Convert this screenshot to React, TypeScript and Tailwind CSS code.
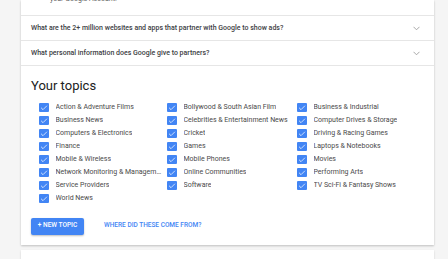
import { Check } from 'lucide-react';

const topics = [
  'Action & Adventure Films',
  'Bollywood & South Asian Film',
  'Business & Industrial',
  'Business News',
  'Celebrities & Entertainment News',
  'Computer Drives & Storage',
  'Computers & Electronics',
  'Cricket',
  'Driving & Racing Games',
  'Finance',
  'Games',
  'Laptops & Notebooks',
  'Mobile & Wireless',
  'Mobile Phones',
  'Movies',
  'Network Monitoring & Management',
  'Online Communities',
  'Performing Arts',
  'Service Providers',
  'Software',
  'TV Sci-Fi & Fantasy Shows',
  'World News',
];

const questions = [
  'What are the 2+ million websites and apps that partner with Google to show ads?',
  'What personal information does Google give to partners?',
];

const Chevron = () => (
  <svg width="7" height="5" viewBox="0 0 7 5" className="text-[#9e9e9e]">
    <polyline points="0.5,0.8 3.5,3.8 6.5,0.8" fill="none" stroke="currentColor" strokeWidth="0.9" />
  </svg>
);

const App = () => {
  return (
    <div className="w-[448px] h-[259px] overflow-hidden bg-[#f5f5f5] font-['Roboto',sans-serif]">
      <div className="ml-[21px] w-[413px] bg-white shadow-[0_1px_2px_rgba(0,0,0,0.22)]">
        {/* tail of the previous answer, scrolled mostly out of view */}
        <div className="h-[15px] overflow-hidden pl-[29px]">
          <p className="-mt-[5px] text-[7px] leading-[9px] text-[#5f5f5f]">your Google Account.</p>
        </div>
        {questions.map((q) => (
          <div
            key={q}
            className="flex h-[25px] items-center justify-between border-t border-[#e6e6e6] pl-[10px] pr-[14px]"
          >
            <span className="text-[7px] font-medium text-[#3c4043]">{q}</span>
            <Chevron />
          </div>
        ))}
        <div className="border-t border-[#e6e6e6] pl-[10px] pt-[12px] pb-[10px]">
          <h2 className="h-[16px] text-[13px] leading-[16px] text-[#212121]">Your topics</h2>
          <div className="mt-[7px] grid grid-cols-[128px_130px_1fr] pl-[8px]">
            {topics.map((t) => (
              <div key={t} className="flex h-[13px] min-w-0 items-center gap-[7px]">
                <span className="flex h-[9.5px] w-[9.5px] shrink-0 items-center justify-center rounded-[1px] bg-[#4285f4]">
                  <Check size={8} strokeWidth={2.2} className="text-white" />
                </span>
                <span className="max-w-[107px] truncate text-[7px] text-[#4a4a4a]">{t}</span>
              </div>
            ))}
          </div>
          <div className="mt-[12.5px] flex items-center gap-[20px]">
            <button className="h-[17px] w-[53px] rounded-[2px] bg-[#4285f4] text-[6.5px] font-medium text-white shadow-[0_1px_2px_rgba(0,0,0,0.25)]">
              + NEW TOPIC
            </button>
            <span className="text-[6.5px] font-medium text-[#4285f4]">WHERE DID THESE COME FROM?</span>
          </div>
        </div>
      </div>
      <div className="ml-[21px] mt-[5px] h-[20px] w-[413px] bg-white shadow-[0_1px_2px_rgba(0,0,0,0.15)]" />
    </div>
  );
};

export default App;
